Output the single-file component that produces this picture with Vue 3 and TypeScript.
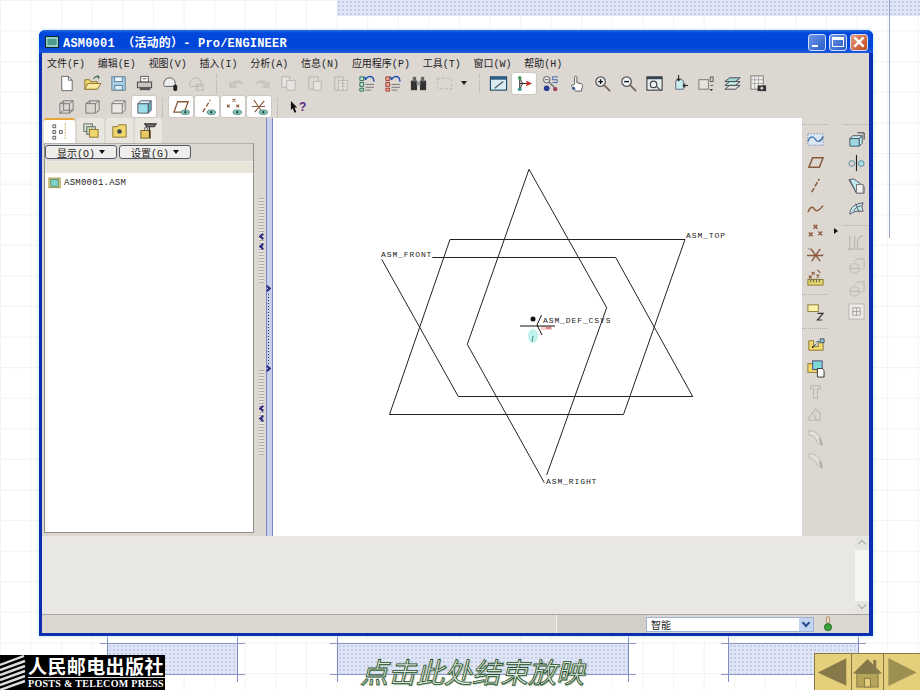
<script setup lang="ts">
type Tool = { icon: string; active?: boolean } | 'sep' | 'drop'

const G = '#b9b5b0' // disabled stroke
const L = '#8a5a3c' // datum brown

const eye = `<ellipse cx="14" cy="16" rx="4.5" ry="2.4" fill="#7fc8b8" stroke="#3a6a60" stroke-width=".7"/><circle cx="14" cy="16" r="1.2" fill="#234"/>`
const disabledSheet = `<rect x="3" y="3" width="8" height="11" fill="#e8e4e0" stroke="${G}"/><rect x="8" y="7" width="9" height="10" fill="#e8e4e0" stroke="${G}"/>`

const icons: Record<string, string> = {
  new: `<path d="M5 2.5h7l4 4v11H5z" fill="#fff" stroke="#666"/><path d="M12 2.5v4h4" fill="none" stroke="#666"/>`,
  open: `<path d="M2 16V6h5l1 2h7v8z" fill="#f2d66e" stroke="#8a7430"/><path d="M2 16l3-6h14l-4 6z" fill="#fbe9a0" stroke="#8a7430"/><path d="M11 5c2-3 4-3 6-2M17 3l-2-1M17 3l-1 2" fill="none" stroke="#2f6a4c" stroke-width="1.3"/>`,
  save: `<rect x="3" y="3" width="14" height="14" fill="#a9d2ea" stroke="#5c7e96"/><rect x="6" y="3" width="8" height="5" fill="#eef6fb" stroke="#5c7e96"/><rect x="6" y="12" width="8" height="5" fill="#dcecf5" stroke="#5c7e96"/>`,
  print: `<rect x="6" y="2.5" width="8" height="6" fill="#fff" stroke="#555"/><rect x="2.5" y="8.5" width="15" height="6" fill="#c8c4c0" stroke="#444"/><rect x="5" y="14" width="11" height="3" fill="#555"/><path d="M8 5h4" stroke="#555"/>`,
  plot: `<path d="M3 10a6 6 0 0 1 12 0v3H5a2 2 0 0 1-2-3z" fill="#eee" stroke="#555"/><rect x="13" y="11" width="4" height="7" rx="2" fill="#222"/>`,
  plotOff: `<path d="M3 10a6 6 0 0 1 12 0v3H5a2 2 0 0 1-2-3z" fill="none" stroke="${G}"/><rect x="10" y="11" width="7" height="6" fill="none" stroke="${G}"/>`,
  undo: `<path d="M4 11c3-5 9-5 13-1-4-2-7-1-9 2l2 2H3V8z" fill="#ccc8c4" stroke="${G}" stroke-width=".6"/>`,
  redo: `<path d="M16 11c-3-5-9-5-13-1 4-2 7-1 9 2l-2 2h7V8z" fill="#ccc8c4" stroke="${G}" stroke-width=".6"/>`,
  docs: disabledSheet,
  paste: `<rect x="4" y="3" width="10" height="13" fill="none" stroke="${G}"/><rect x="9" y="8" width="8" height="9" fill="#e8e4e0" stroke="${G}"/>`,
  clip: `<rect x="4" y="3" width="9" height="14" fill="none" stroke="${G}"/><rect x="8" y="7" width="9" height="10" fill="#e8e4e0" stroke="${G}"/><path d="M10 10h5M10 13h5M12.5 7v10" stroke="${G}"/>`,
  treeBlue: `<path d="M3 3h4v4H3zM3 9h4v4H3zM3 15h4v3H3z" fill="#bfe3d4" stroke="#2b6a50"/><path d="M9 11h9M9 14h9M9 17h6" stroke="#777"/><path d="M9 6c2-4 5-4 8-2M9 6l-1-3M17 4l1 4" fill="none" stroke="#1c4fb0" stroke-width="1.5"/>`,
  treeRed: `<path d="M3 3h4v4H3zM3 9h4v4H3zM3 15h4v3H3z" fill="#f0a8a0" stroke="#a03a30"/><path d="M9 11h9M9 14h9M9 17h6" stroke="#777"/><path d="M9 6c2-4 5-4 8-2M9 6l-1-3M17 4l1 4" fill="none" stroke="#1c4fb0" stroke-width="1.5"/>`,
  bino: `<rect x="2" y="7" width="6.5" height="10" fill="#333"/><rect x="11.5" y="7" width="6.5" height="10" fill="#333"/><rect x="4" y="3" width="3.5" height="5" fill="#666"/><rect x="12.5" y="3" width="3.5" height="5" fill="#666"/><rect x="8" y="8" width="4" height="4" fill="#999"/>`,
  frame: `<rect x="2.5" y="4.5" width="15" height="11" fill="none" stroke="${G}" stroke-dasharray="3 2"/>`,
  repaint: `<rect x="1.5" y="3" width="17" height="14" fill="#d8ecf2" stroke="#234a68" stroke-width="1.2"/><rect x="1.5" y="3" width="17" height="3" fill="#2d5f86"/><path d="M6 15l9-7" stroke="#556" stroke-width="1.4"/>`,
  spin: `<path d="M5 4v12M5 10h9" stroke="#333" fill="none" stroke-width="1.2"/><path d="M5 4l3 6-3 6" fill="none" stroke="#333"/><circle cx="5" cy="4" r="2" fill="#44a060"/><circle cx="5" cy="16" r="2" fill="#3a9a90"/><path d="M12 7l6 3-6 3z" fill="#c03828"/>`,
  views: `<circle cx="6" cy="6" r="3.4" fill="#eee" stroke="#555"/><path d="M4 6h4" stroke="#555"/><path d="M8 8l7 7" stroke="#777" stroke-width="1.6"/><circle cx="6" cy="15" r="3" fill="#2a3f94"/><circle cx="15" cy="16" r="2.2" fill="#a04060"/><path d="M12 3h6M12 3v3h5v3h-5" fill="none" stroke="#3c6aa8"/>`,
  hand: `<path d="M8 10V3.5a1.2 1.2 0 0 1 2.4 0V9l5 1.5c1 .6 1 1.6.8 3L15 18H9l-4-5c-.8-1.2.6-2.4 1.8-1.2z" fill="#fff" stroke="#555"/><circle cx="7" cy="15" r="1.6" fill="#3a5aa0"/>`,
  zoomIn: `<circle cx="8" cy="8" r="5" fill="#eef3f4" stroke="#555" stroke-width="1.3"/><path d="M5.5 8h5M8 5.5v5" stroke="#111" stroke-width="1.5"/><path d="M12 12l6 6" stroke="#7a6a5a" stroke-width="2"/>`,
  zoomOut: `<circle cx="8" cy="8" r="5" fill="#eef3f4" stroke="#555" stroke-width="1.3"/><path d="M5.5 8h5" stroke="#111" stroke-width="1.5"/><path d="M12 12l6 6" stroke="#7a6a5a" stroke-width="2"/>`,
  refit: `<rect x="2" y="3" width="16" height="14" fill="#e9eef0" stroke="#333" stroke-width="1.1"/><rect x="2" y="3" width="16" height="2.5" fill="#345"/><circle cx="9" cy="11" r="3.4" fill="none" stroke="#444" stroke-width="1.3"/><path d="M12 13l5 5" stroke="#666" stroke-width="1.5"/>`,
  orient: `<path d="M5 7l4-2 4 2v9H5z" fill="#c8eef2" stroke="#667"/><path d="M8 1v6M6 5l2 2 2-2M18 12h-5M15 10l-2 2 2 2" fill="none" stroke="#222" stroke-width="1.1"/>`,
  saved: `<rect x="2" y="6" width="10" height="10" fill="#e4e4da" stroke="#777"/><path d="M14 3v5h3V3zM14 12h3" fill="none" stroke="#555"/><path d="M13 16l2 2 2-2" fill="#222"/>`,
  layers: `<path d="M2 8l5-4h11l-5 4z" fill="#9fdcd0" stroke="#445"/><path d="M2 12l5-4h11l-5 4z" fill="#c4ece2" stroke="#445"/><path d="M2 16l5-4h11l-5 4z" fill="#e4e4da" stroke="#445"/>`,
  table: `<rect x="2" y="2" width="13" height="14" fill="#f2f0ec" stroke="#777"/><path d="M2 6h13M2 10h13M6 2v14M10 2v14" stroke="#aaa"/><rect x="9" y="12" width="9" height="6" fill="#333"/><circle cx="13.5" cy="15" r="1.5" fill="#ccc"/>`,
  boxA: `<path d="M3 7h10v10H3zM3 7l4-3h10l-4 3M13 17l4-3V4M7 4v10h10M3 17l4-3" fill="none" stroke="#777"/>`,
  boxB: `<path d="M3 7h10v10H3zM3 7l4-3h10l-4 3M13 17l4-3V4" fill="none" stroke="#777"/><path d="M7 4v3" stroke="#777"/>`,
  boxC: `<path d="M3 7h11v10H3zM3 7l3-3h11l-3 3M14 17l3-3V4" fill="#ebe8e4" stroke="#777"/>`,
  shaded: `<path d="M3 7h11v10H3z" fill="#9ee0ea" stroke="#556"/><path d="M3 7l3-3h11l-3 3z" fill="#d8f6fa" stroke="#556"/><path d="M14 17l3-3V4l-3 3z" fill="#5cb4c4" stroke="#556"/>`,
  planeEye: `<path d="M2 16l4-11h11l-4 11z" fill="none" stroke="${L}" stroke-width="1.4"/>${eye}`,
  axisEye: `<path d="M5 16L13 3" stroke="${L}" stroke-width="1.4" stroke-dasharray="5 2"/>${eye}`,
  pointEye: `<path d="M9 2l3 3M12 2L9 5M3 8l3 3M6 8l-3 3M13 8l3 3M16 8l-3 3" stroke="${L}" stroke-width="1.1"/>${eye}`,
  csysEye: `<path d="M4 3l9 13M15 4L5 16M2 10h14" stroke="${L}" stroke-width="1.1"/>${eye}`,
  sketchPts: `<rect x="2" y="4" width="16" height="12" fill="#dbe6f4" stroke="#7a8ab0" stroke-dasharray="1.5 1.5"/><path d="M2 12c3-7 6-5 8-2s5 3 8-3" fill="none" stroke="#3a6aa8" stroke-width="1.4"/>`,
  plane: `<path d="M3 15l4-10h11l-4 10z" fill="none" stroke="${L}" stroke-width="1.6"/>`,
  axis: `<path d="M6 17L14 3" stroke="${L}" stroke-width="1.6" stroke-dasharray="5 2"/>`,
  curve: `<path d="M2 14c3-7 5-6 7-3s5 1 9-4" fill="none" stroke="${L}" stroke-width="1.5"/>`,
  points: `<path d="M8 3l4 4M12 3L8 7M3 11l4 4M7 11l-4 4M13 10l4 4M17 10l-4 4" stroke="${L}" stroke-width="1.5"/>`,
  csys: `<path d="M5 4l10 13M15 4L6 17M1 11h17" stroke="${L}" stroke-width="1.5"/><path d="M2 3l2 2M4 3L2 5M17 10h2" stroke="#999"/>`,
  ptsRuler: `<path d="M6 4l3 3M9 4L6 7M12 2l3 3M3 8l3 3M6 8l-3 3M11 7l3 3M14 7l-3 3" stroke="${L}" stroke-width="1.2"/><rect x="2" y="12" width="16" height="6" fill="#e2d66a" stroke="#8a7a30"/><path d="M5 12v3M8 12v3M11 12v3M14 12v3" stroke="#555"/>`,
  note: `<rect x="2" y="3" width="11" height="7" fill="#f8f2a6" stroke="#8a7a40"/><path d="M12 12h6l-6 7h5" fill="none" stroke="#333" stroke-width="1.2"/>`,
  cube: `<path d="M3 9h10v8H3z" fill="#9ed8e2" stroke="#456"/><path d="M3 9l3-3h10l-3 3zM13 17l3-3V6l-3 3z" fill="#c8eef2" stroke="#456"/><path d="M11 3h7v7" fill="none" stroke="#333"/>`,
  mirror: `<circle cx="5" cy="11" r="3" fill="none" stroke="#4f8a98"/><circle cx="15" cy="11" r="3" fill="#a9dfe8" stroke="#4f8a98"/><path d="M10 2v17" stroke="#222" stroke-width="1.2"/>`,
  trim: `<path d="M2 4l5-1 11 8v7H10z" fill="#bfe8ee" stroke="#556"/><path d="M3 4l7 14" stroke="#556"/><rect x="10" y="9" width="7" height="9" fill="#f0f0ec" stroke="#777"/>`,
  surf: `<path d="M3 16c0-7 5-11 14-12-2 3-1 6 0 9-5-1-10 0-14 3z" fill="#c4ecec" stroke="#556"/><path d="M7 13c1-3 4-5 8-6M9 5l4 9" stroke="#556" fill="none"/>`,
  fillet: `<path d="M3 3v9c0 3-1 5-2 5h7V3M17 3c-4 0-6 3-6 8v6h7" fill="none" stroke="${G}" stroke-width="1.2"/>`,
  disc: `<ellipse cx="8" cy="13" rx="5" ry="5" fill="none" stroke="${G}"/><path d="M8 6l3-3h7v9l-3 3M3 13h10" fill="none" stroke="${G}"/>`,
  grid: `<rect x="2" y="2" width="16" height="16" fill="#ecebe6" stroke="${G}"/><path d="M6 6h8v8H6zM10 6v8M6 10h8" fill="none" stroke="#a8a4a0"/>`,
  flat: `<path d="M3 15V5h5v6h5V7h5v8z" fill="#f4d96c" stroke="#8a7430"/><path d="M7 12l4-4M11 6h4v-3h4v4h-4" fill="#9fc8dc" stroke="#356"/><path d="M6 13l2-1-1-2z" fill="#111"/>`,
  copyGeom: `<rect x="2" y="5" width="10" height="9" fill="#f4d96c" stroke="#8a7430"/><rect x="7" y="2" width="10" height="9" fill="#7fd8d8" stroke="#447"/><path d="M12 10h5l2 2v7h-7z" fill="#fff" stroke="#333"/>`,
  ttOff: `<path d="M5 4h10v3h-3v10H8V7H5z" fill="none" stroke="${G}" stroke-width="1.1"/>`,
  draftOff: `<path d="M2 15l8-11 5 5v7H4zM8 9l3 7" fill="none" stroke="${G}" stroke-width="1.1"/>`,
  bendOff: `<path d="M3 3c6-1 11 4 13 9l1 6-5-3c-1-4-4-7-9-8z" fill="#e4e0dc" stroke="${G}"/><path d="M14 11l3 7" stroke="#a8a4a0" stroke-width="1.6"/>`,
  modelTree: `<path d="M3 3h3v3H3zM3 9h3v3H3zM3 15h3v3H3zM10 9h3v3h-3z" fill="none" stroke="#555"/><path d="M16 1v18" stroke="#c9b070" stroke-dasharray="2 1"/>`,
  layerTab: `<rect x="3" y="3" width="9" height="8" fill="#d9e8c8" stroke="#667"/><rect x="6" y="6" width="9" height="8" fill="#bfd7a8" stroke="#667"/><rect x="9" y="9" width="9" height="8" fill="#f2d66e" stroke="#8a7430"/>`,
  folderTab: `<path d="M3 17V6h5l1-2h8v13z" fill="#f2d66e" stroke="#8a7430"/><circle cx="10" cy="11" r="2.4" fill="#345"/>`,
  toolTab: `<rect x="2" y="10" width="10" height="8" fill="#e8c860" stroke="#7a6428"/><path d="M6 10V7h3v3" fill="none" stroke="#666"/><path d="M6 3h12l-2 3H8zM11 6v12" stroke="#333" fill="#777" stroke-width="1.2"/>`,
  asm: `<rect x="1.5" y="4" width="15" height="13" fill="#efe08a" stroke="#8a7a30"/><rect x="4" y="6" width="10" height="9" fill="#7fd0c8" stroke="#3a7a70"/>`,
  light: `<rect x="8" y="1" width="4" height="8" rx="2" fill="#e8e4c8" stroke="#a06a50"/><circle cx="10" cy="14" r="4.5" fill="#3aa03a" stroke="#1c6a1c"/>`,
}

const menus = ['文件(F)', '编辑(E)', '视图(V)', '插入(I)', '分析(A)', '信息(N)', '应用程序(P)', '工具(T)', '窗口(W)', '帮助(H)']

const row1: Tool[] = [
  { icon: 'new' }, { icon: 'open' }, { icon: 'save' }, { icon: 'print' }, { icon: 'plot' }, { icon: 'plotOff' }, 'sep',
  { icon: 'undo' }, { icon: 'redo' }, { icon: 'docs' }, { icon: 'paste' }, { icon: 'clip' }, { icon: 'treeBlue' }, { icon: 'treeRed' },
  { icon: 'bino' }, { icon: 'frame' }, 'drop', 'sep',
  { icon: 'repaint' }, { icon: 'spin', active: true }, { icon: 'views' }, { icon: 'hand' }, { icon: 'zoomIn' }, { icon: 'zoomOut' },
  { icon: 'refit' }, { icon: 'orient' }, { icon: 'saved' }, { icon: 'layers' }, { icon: 'table' },
]
const row2: Tool[] = [
  { icon: 'boxA' }, { icon: 'boxB' }, { icon: 'boxC' }, { icon: 'shaded', active: true }, 'sep',
  { icon: 'planeEye', active: true }, { icon: 'axisEye', active: true }, { icon: 'pointEye', active: true }, { icon: 'csysEye', active: true }, 'sep',
]

const sideLeft = [
  ['sketchPts', 'plane', 'axis', 'curve', 'points', 'csys', 'ptsRuler'],
  ['note'],
  ['flat', 'copyGeom', 'ttOff', 'draftOff', 'bendOff', 'bendOff'],
]
const sideRight = [
  ['cube', 'mirror', 'trim', 'surf'],
  ['fillet', 'disc', 'disc', 'grid'],
]

const tabs = ['modelTree', 'layerTab', 'folderTab', 'toolTab']
</script>

<template>
  <div class="slide">
    <!-- slide template decoration -->
    <div class="band-top"></div>
    <div class="rule-v"></div>
    <div class="band band-a"></div>
    <div class="band band-b"></div>
    <div class="band band-c"></div>

    <div class="window">
      <div class="titlebar">
        <svg class="title-icon" viewBox="0 0 14 12"><rect x=".5" y=".5" width="13" height="11" fill="#8fd0c0" stroke="#123" /><rect x="2.5" y="3" width="9" height="6" fill="#4f9a90" /></svg>
        <span class="title-text">ASM0001 （活动的）- Pro/ENGINEER</span>
        <div class="caption-btns">
          <span class="cap cap-min"><i></i></span>
          <span class="cap cap-max"><i></i></span>
          <span class="cap cap-close">
            <svg viewBox="0 0 12 12"><path d="M2 2l8 8M10 2l-8 8" stroke="#fff" stroke-width="2" /></svg>
          </span>
        </div>
      </div>

      <div class="menubar">
        <span v-for="m in menus" :key="m" class="menu-item">{{ m }}</span>
      </div>

      <div class="toolbar toolbar-1">
        <template v-for="(t, i) in row1" :key="i">
          <span v-if="t === 'sep'" class="tool-sep"></span>
          <span v-else-if="t === 'drop'" class="tool-drop"></span>
          <span v-else class="tool" :class="{ active: t.active }">
            <svg viewBox="0 0 20 20" v-html="icons[t.icon]"></svg>
          </span>
        </template>
      </div>
      <div class="toolbar toolbar-2">
        <template v-for="(t, i) in row2" :key="i">
          <span v-if="t === 'sep'" class="tool-sep short"></span>
          <span v-else-if="t !== 'drop'" class="tool" :class="{ active: t.active }">
            <svg viewBox="0 0 20 20" v-html="icons[t.icon]"></svg>
          </span>
        </template>
        <span class="whatsthis">
          <svg viewBox="0 0 10 14"><path d="M1 1l7 7H5l2 5-2 1-2-5-2 2z" fill="#111" /></svg><b>?</b>
        </span>
      </div>

      <div class="main">
        <aside class="nav">
          <div class="nav-tabs">
            <span v-for="(t, i) in tabs" :key="t" class="nav-tab" :class="{ current: i === 0 }">
              <svg viewBox="0 0 20 20" v-html="icons[t]"></svg>
            </span>
          </div>
          <div class="nav-panel">
            <div class="nav-btns">
              <span class="nav-btn">显示(O)<i></i></span>
              <span class="nav-btn">设置(G)<i></i></span>
            </div>
            <div class="tree-head"></div>
            <div class="tree">
              <div class="tree-row">
                <svg viewBox="0 0 18 20" v-html="icons.asm"></svg>
                <span>ASM0001.ASM</span>
              </div>
            </div>
          </div>
        </aside>

        <div class="sash">
          <div class="sash-grip grip-1"><i></i><i></i></div>
          <div class="sash-grip grip-2"><i></i><i></i></div>
          <div class="sash-line"></div>
          <em class="chev chev-1"></em>
          <em class="chev chev-2"></em>
          <span class="sash-dots"></span>
        </div>

        <div class="graphics">
          <svg viewBox="272 118 530 418" width="530" height="418">
            <ellipse cx="533" cy="336" rx="5" ry="7" fill="#bff2ef" />
            <path d="M532 342l1-6" stroke="#5a8a8a" />
            <path d="M541 328h11" stroke="#f8d0d0" stroke-width="4" />
            <path d="M546 328h5" stroke="#c03838" />
            <g fill="none" stroke="#222" stroke-width="1">
              <path d="M450 239.5H685L623.5 414.5H389.5Z" />
              <path d="M381.7 259.3L458.3 396.5H692.7L615.7 257.5H432.3" />
              <path d="M546.7 475L606.7 307.7L529 169.3L467.3 344.3L544.3 482.7" />
              <path d="M520 326H555M541.5 315L537 325L542 335" stroke="#111" />
            </g>
            <circle cx="533" cy="319" r="2.5" fill="#111" />
            <g class="datum-label">
              <text x="381" y="257">ASM_FRONT</text>
              <text x="686" y="238">ASM_TOP</text>
              <text x="543" y="323">ASM_DEF_CSYS</text>
              <text x="546" y="484">ASM_RIGHT</text>
            </g>
          </svg>
        </div>

        <aside class="side">
          <em class="side-more"></em>
          <div class="side-col">
            <span class="side-sep"></span>
            <template v-for="(group, g) in sideLeft" :key="g">
              <span v-if="g > 0" class="side-sep tall"></span>
              <span v-for="(ic, i) in group" :key="i" class="side-tool">
                <svg viewBox="0 0 20 20" v-html="icons[ic]"></svg>
              </span>
            </template>
          </div>
          <div class="side-col">
            <span class="side-sep"></span>
            <template v-for="(group, g) in sideRight" :key="g">
              <span v-if="g > 0" class="side-sep tall"></span>
              <span v-for="(ic, i) in group" :key="i" class="side-tool">
                <svg viewBox="0 0 20 20" v-html="icons[ic]"></svg>
              </span>
            </template>
          </div>
        </aside>
      </div>

      <div class="message">
        <div class="msg-area"></div>
        <div class="scroll">
          <span class="scroll-btn up"></span>
          <span class="scroll-btn down"></span>
        </div>
      </div>

      <div class="status">
        <div class="status-fill"></div>
        <div class="status-cell"></div>
        <div class="select">
          <span>智能</span>
          <i class="select-arrow"></i>
        </div>
        <svg class="status-light" viewBox="0 0 20 20" v-html="icons.light"></svg>
      </div>
    </div>

    <footer class="footer">
      <div class="logo">
        <svg class="logo-mark" viewBox="0 0 28 35">
          <path d="M0 10L24 1M0 15L25 6M0 20L25 11M0 25L25 16M0 30L25 21M0 35L25 26" stroke="#ddd" stroke-width="2.4" />
        </svg>
        <div class="logo-text">
          <div class="logo-cn">人民邮电出版社</div>
          <div class="logo-en">POSTS &amp; TELECOM PRESS</div>
        </div>
      </div>
      <div class="caption">点击此处结束放映</div>
      <nav class="nav-arrows">
        <span class="arrow-btn back"><svg viewBox="0 0 38 37"><path d="M33 4V33L3 19Z" fill="#85794a" /></svg></span>
        <span class="arrow-btn home">
          <svg viewBox="0 0 32 37">
            <path d="M1 20L16 5l6 6V6h3v8l6 6z" fill="#85794a" />
            <rect x="5" y="20" width="22" height="14" fill="#b5a45a" stroke="#85794a" />
            <rect x="13" y="25" width="6" height="9" fill="#e6cf7b" stroke="#85794a" />
          </svg>
        </span>
        <span class="arrow-btn next"><svg viewBox="0 0 36 37"><path d="M4 4V33L33 19Z" fill="#9c8f52" /></svg></span>
      </nav>
    </footer>
  </div>
</template>

<style scoped>
.slide {
  position: relative;
  display: flex;
  flex-direction: column;
  width: 920px;
  height: 690px;
  overflow: hidden;
  background-color: #fff;
  background-image:
    linear-gradient(#f3f3f3 1px, transparent 1px),
    linear-gradient(90deg, #f3f3f3 1px, transparent 1px);
  background-size: 30.6px 30.6px;
  font-family: "Liberation Sans", "Noto Sans CJK SC", sans-serif;
}

/* ---- template decoration ---- */
.band-top {
  position: absolute;
  left: 337px;
  top: 0;
  width: 583px;
  height: 16px;
  background-color: #dfe5f5;
  background-image: radial-gradient(#c3cdea 1px, transparent 1.2px);
  background-size: 4px 4px;
}
.band {
  position: absolute;
  top: 636px;
  height: 46px;
  background:
    linear-gradient(#8c97c8, #8c97c8) 0 7px / 100% 1px no-repeat,
    linear-gradient(#8c97c8, #8c97c8) 0 38px / 100% 1px no-repeat,
    linear-gradient(#7f8cc4, #7f8cc4) 7px 0 / 1px 100% no-repeat,
    linear-gradient(#7f8cc4, #7f8cc4) calc(100% - 7px) 0 / 1px 100% no-repeat;
}
.band::before {
  content: '';
  position: absolute;
  left: 8px;
  right: 8px;
  top: 8px;
  bottom: 8px;
  background-color: #dfe5f5;
  background-image: radial-gradient(#c3cdea 1px, transparent 1.2px);
  background-size: 4px 4px;
}
.band-a { left: 100px; width: 145px; }
.band-b { left: 330px; width: 306px; }
.band-c { left: 721px; width: 145px; }
.rule-v {
  position: absolute;
  left: 889px;
  top: 0;
  width: 1px;
  height: 238px;
  background: #98a4d8;
}

/* ---- window ---- */
.window {
  position: relative;
  display: flex;
  flex-direction: column;
  flex: none;
  box-sizing: border-box;
  width: 834px;
  height: 606px;
  margin: 30px 0 0 39px;
  padding: 0 4px 3px 3px;
  border-radius: 6px 6px 0 0;
  background: #0b2fb0;
  box-shadow: 0 0 3px 1px #cfeeff;
}
.titlebar {
  display: flex;
  align-items: center;
  flex: none;
  height: 23px;
  margin: 0 -4px 0 -3px;
  padding: 0 5px 0 6px;
  border-radius: 6px 6px 0 0;
  background: linear-gradient(#2a6ae0 0, #0048dc 3px, #0044d8 16px, #1c58d8 100%);
}
.title-icon { width: 14px; height: 12px; margin-right: 4px; }
.title-text {
  color: #fff;
  font: bold 12px "Liberation Mono", "Noto Sans CJK SC", monospace;
  letter-spacing: .2px;
  white-space: pre;
}
.caption-btns {
  display: flex;
  gap: 3px;
  margin-left: auto;
  padding-top: 2px;
}
.cap {
  position: relative;
  box-sizing: border-box;
  width: 18px;
  height: 17px;
  border: 1px solid #cfe0f8;
  border-radius: 3px;
  background: linear-gradient(135deg, #6d97e8, #2a5cc8);
}
.cap-min i {
  position: absolute;
  left: 3px;
  bottom: 3px;
  width: 6px;
  height: 2px;
  background: #fff;
}
.cap-max i {
  position: absolute;
  left: 2px;
  top: 2px;
  width: 12px;
  height: 10px;
  box-sizing: border-box;
  border: 1px solid #fff;
  border-top-width: 3px;
}
.cap-close { background: linear-gradient(135deg, #e89a7c, #bf4a20); }
.cap-close svg { display: block; width: 14px; height: 14px; margin: 0 0 0 1px; }

.menubar {
  display: flex;
  align-items: center;
  flex: none;
  gap: 12.8px;
  height: 18px;
  padding-left: 5px;
  background: #ddd7d2;
  color: #222;
  font: 10px "Liberation Mono", "Noto Sans CJK SC", monospace;
  white-space: nowrap;
}
.menu-item { flex: none; }

.toolbar {
  display: flex;
  align-items: center;
  flex: none;
  padding-left: 11px;
  background: #ddd7d2;
}
.toolbar-1 { height: 24px; }
.toolbar-2 { height: 23px; }
.tool {
  display: flex;
  align-items: center;
  justify-content: center;
  flex: none;
  box-sizing: border-box;
  width: 26px;
  height: 23px;
}
.tool svg { width: 19px; height: 19px; }
.tool.active {
  border: 1px solid #cdc8c2;
  border-radius: 3px;
  background: #fff;
}
.tool-sep {
  flex: none;
  width: 14px;
  height: 20px;
  background: linear-gradient(#aaa 50%, transparent 50%) center / 1px 2px repeat-y;
}
.tool-sep.short { width: 11px; }
.tool-drop {
  position: relative;
  flex: none;
  width: 16px;
  height: 4px;
}
.tool-drop::after {
  content: '';
  position: absolute;
  left: 4px;
  top: 0;
  border: 3.5px solid transparent;
  border-top: 4px solid #222;
}
.toolbar-1 .tool-drop + .tool-sep { width: 12px; }
.whatsthis {
  display: flex;
  align-items: center;
  margin-left: 7px;
}
.whatsthis svg { width: 9px; height: 13px; }
.whatsthis b { color: #5a2a78; font-size: 12px; line-height: 12px; }

/* ---- main row ---- */
.main {
  display: flex;
  flex: none;
  height: 418px;
  background: #ddd7d2;
}
.nav {
  display: flex;
  flex-direction: column;
  flex: none;
  width: 210px;
  margin-left: 2px;
}
.nav-tabs {
  display: flex;
  gap: 2px;
  flex: none;
  height: 25px;
}
.nav-tab {
  display: flex;
  align-items: center;
  justify-content: center;
  box-sizing: border-box;
  width: 27px;
  border-radius: 3px 3px 0 0;
  background: #e9e6e0;
}
.nav-tab.current {
  width: 31px;
  border-top: 2px solid #e8a838;
  background: #fff;
}
.nav-tab svg { width: 19px; height: 19px; }
.nav-panel {
  display: flex;
  flex-direction: column;
  flex: none;
  height: 390px;
  box-sizing: border-box;
  border: 1px solid #8f8f8c;
  border-top-color: #b5b1ac;
}
.nav-btns {
  display: flex;
  gap: 2px;
  flex: none;
  height: 17px;
  padding-top: 1px;
  box-sizing: border-box;
}
.nav-btn {
  display: flex;
  align-items: center;
  justify-content: center;
  gap: 4px;
  box-sizing: border-box;
  width: 72px;
  height: 14px;
  border: 1px solid #4f5a66;
  border-radius: 3px;
  background: #f0eeea;
  color: #222;
  font: 10px "Liberation Mono", "Noto Sans CJK SC", monospace;
}
.nav-btn i {
  border: 3px solid transparent;
  border-top: 4px solid #111;
  border-bottom: 0;
}
.tree-head {
  flex: none;
  height: 12px;
  box-sizing: border-box;
  background: #e8e6d8;
  border-top: 1px solid #eee;
}
.tree {
  flex: 1;
  background: #fff;
}
.tree-row {
  display: flex;
  align-items: center;
  gap: 2px;
  padding: 2px 0 0 2px;
  color: #222;
  font: 9px "Liberation Mono", monospace;
  letter-spacing: .25px;
}
.tree-row svg { width: 15px; height: 15px; }

.sash {
  position: relative;
  flex: none;
  width: 18px;
}
.sash-line {
  position: absolute;
  left: 12px;
  top: 0;
  bottom: 0;
  width: 5px;
  border-left: 1px solid #7b86c8;
  border-right: 1px solid #7b86c8;
  background: #c8d0ec;
}
.sash-grip {
  position: absolute;
  left: 5px;
  width: 5px;
  height: 85px;
  background: repeating-linear-gradient(#b0aca6 0 1px, #e6e3de 1px 3px);
}
.grip-1 { top: 80px; }
.grip-2 { top: 252px; }
.sash-grip i {
  position: absolute;
  left: 1px;
  width: 5px;
  height: 5px;
  box-sizing: border-box;
  border-left: 2px solid #2e2a80;
  border-bottom: 2px solid #2e2a80;
  transform: rotate(45deg);
}
.sash-grip i:first-child { top: 36px; }
.sash-grip i:last-child { top: 46px; }
.chev {
  position: absolute;
  left: 11px;
  width: 5px;
  height: 5px;
  box-sizing: border-box;
  border-right: 2px solid #2e2a80;
  border-top: 2px solid #2e2a80;
  transform: rotate(45deg);
}
.chev-1 { top: 168px; }
.chev-2 { top: 248px; }
.sash-dots {
  position: absolute;
  left: 14px;
  top: 176px;
  width: 1px;
  height: 72px;
  background: repeating-linear-gradient(#333 0 1px, transparent 1px 3px);
}

.graphics {
  flex: none;
  width: 530px;
  background: #fff;
}
.graphics svg { display: block; }
.datum-label text {
  fill: #222;
  font: 8px "Liberation Mono", monospace;
  letter-spacing: .9px;
}

.side {
  position: relative;
  display: flex;
  justify-content: space-between;
  flex: none;
  width: 67px;
}
.side-more {
  position: absolute;
  left: 32px;
  top: 110px;
  border: 3px solid transparent;
  border-left: 4px solid #111;
}
.side-col {
  display: flex;
  flex-direction: column;
  width: 26px;
  padding-top: 3px;
}
.side-sep {
  flex: none;
  height: 7px;
  background: linear-gradient(90deg, #aaa 50%, transparent 50%) 0 50% / 2px 1px repeat-x;
}
.side-sep.tall { height: 11px; }
.side-tool {
  display: flex;
  align-items: center;
  justify-content: center;
  flex: none;
  height: 23px;
}
.side-tool svg { width: 19px; height: 19px; }

/* ---- bottom ---- */
.message {
  display: flex;
  flex: none;
  height: 78px;
  box-sizing: border-box;
  border-top: 1px solid #ece9e5;
  background: #ddd7d2;
}
.msg-area { flex: 1; background: #e9e7e3; }
.scroll {
  display: flex;
  flex-direction: column;
  justify-content: space-between;
  flex: none;
  width: 14px;
  background: #f6f5f1;
}
.scroll-btn {
  position: relative;
  height: 13px;
  border-radius: 2px;
  background: #e6e4e0;
}
.scroll-btn::after {
  content: '';
  position: absolute;
  left: 4px;
  top: 4px;
  width: 6px;
  height: 6px;
  box-sizing: border-box;
  border-left: 1.5px solid #a8a8a8;
  border-top: 1.5px solid #a8a8a8;
  transform: rotate(45deg);
}
.scroll-btn.down::after { top: 1px; transform: rotate(225deg); }

.status {
  display: flex;
  align-items: center;
  flex: none;
  height: 19px;
  border-top: 1px solid #a8a6a2;
  box-sizing: border-box;
  background: #ddd7d2;
}
.status-fill { flex: none; width: 514px; height: 100%; }
.status-cell {
  flex: none;
  width: 89px;
  height: 100%;
  border-left: 1px solid #f0eeea;
  background: #d3cec8;
}
.select {
  position: relative;
  display: flex;
  align-items: center;
  flex: none;
  box-sizing: border-box;
  width: 168px;
  height: 15px;
  padding-left: 4px;
  border: 1px solid #9fb4d4;
  background: #fff;
  color: #222;
  font-size: 10px;
}
.select-arrow {
  position: absolute;
  right: 0;
  top: 0;
  width: 14px;
  height: 13px;
  background: #c2d4f0;
}
.select-arrow::after {
  content: '';
  position: absolute;
  left: 4px;
  top: 2px;
  width: 6px;
  height: 6px;
  box-sizing: border-box;
  border-right: 2px solid #2a4a8c;
  border-bottom: 2px solid #2a4a8c;
  transform: rotate(45deg);
}
.status-light { width: 16px; height: 16px; margin-left: 6px; }

/* ---- footer ---- */
.footer {
  position: relative;
  display: flex;
  margin-top: auto;
  height: 37px;
  overflow: hidden;
}
.logo {
  display: flex;
  flex: none;
  width: 165px;
  height: 35px;
  margin-top: 2px;
  background: #000;
}
.logo-mark { flex: none; width: 28px; height: 35px; }
.logo-text { flex: 1; color: #fff; }
.logo-cn {
  height: 22px;
  border-bottom: 1px solid #ddd;
  font: bold 19px/22px "Noto Sans CJK SC", sans-serif;
  letter-spacing: .4px;
  white-space: nowrap;
}
.logo-en {
  font: bold 10px/12px "Liberation Serif", serif;
  letter-spacing: .3px;
  white-space: nowrap;
}
.caption {
  flex: none;
  width: 224px;
  margin-left: 195px;
  padding-top: 5px;
  color: #dce8dc;
  font-size: 28px;
  font-style: italic;
  line-height: 32px;
  white-space: nowrap;
  -webkit-text-stroke: .8px #1f4f2c;
  text-shadow: 1px 1px 1px #8aa88a;
}
.nav-arrows {
  display: flex;
  flex: none;
  margin-left: auto;
  width: 106px;
}
.arrow-btn {
  box-sizing: border-box;
  border: 1px solid #85794a;
  border-bottom: 0;
  background: #e6cf7b;
}
.arrow-btn svg { display: block; width: 100%; height: 100%; }
.back { width: 38px; }
.home { width: 32px; border-left: 0; }
.next { width: 36px; border-left: 0; border-right: 0; }
</style>
